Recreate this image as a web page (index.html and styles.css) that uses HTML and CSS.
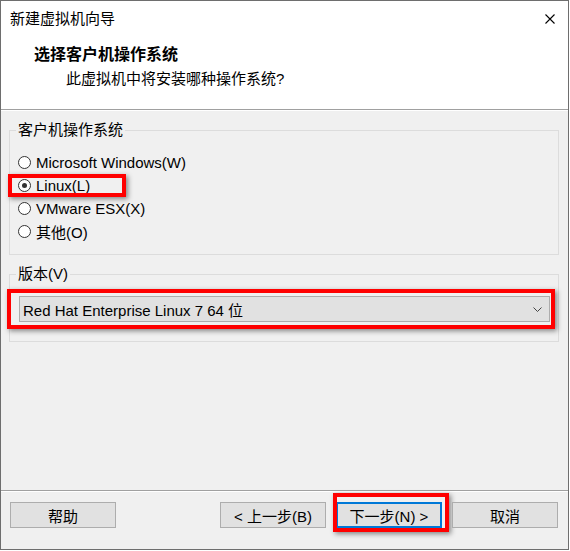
FILE: index.html
```html
<!DOCTYPE html>
<html lang="zh-CN">
<head>
    <meta charset="UTF-8">
    <title>新建虚拟机向导</title>
    <link rel="stylesheet" href="styles.css">
</head>
<body>

<div class="window">
    <div class="titlebar">
        <span class="title">新建虚拟机向导</span>
        <svg class="close" width="10" height="10" viewBox="0 0 10 10">
            <path d="M0.5 0.5L9.5 9.5M9.5 0.5L0.5 9.5" stroke="#000" stroke-width="1.1" fill="none"/>
        </svg>
    </div>

    <div class="header">
        <div class="header-title">选择客户机操作系统</div>
        <div class="header-sub">此虚拟机中将安装哪种操作系统?</div>
    </div>

    <div class="content">
        <fieldset class="group group-os">
            <legend>客户机操作系统</legend>
            <label class="radio-row"><span class="radio"></span>Microsoft Windows(W)</label>
            <label class="radio-row marked"><span class="radio checked"></span>Linux(L)<span class="mark mark-linux"></span></label>
            <label class="radio-row"><span class="radio"></span>VMware ESX(X)</label>
            <label class="radio-row"><span class="radio"></span>其他(O)</label>
        </fieldset>

        <fieldset class="group group-version">
            <legend>版本(V)</legend>
            <div class="combo">
                <span>Red Hat Enterprise Linux 7 64 位</span>
                <svg class="chevron" width="9" height="5" viewBox="0 0 9 5">
                    <path d="M0.5 0.5L4.5 4.5L8.5 0.5" stroke="#444" stroke-width="1" fill="none"/>
                </svg>
                <span class="mark mark-combo"></span>
            </div>
        </fieldset>
    </div>

    <div class="footer">
        <button class="btn">帮助</button>
        <div class="spacer"></div>
        <button class="btn">&lt; 上一步(B)</button>
        <button class="btn btn-default">下一步(N) &gt;<span class="mark mark-next"></span></button>
        <button class="btn">取消</button>
    </div>
</div>

</body>
</html>
```

FILE: styles.css
```css
body {
    margin: 0;
    padding: 0;
    background: #fff;
    font-family: "Liberation Sans", "Noto Sans CJK SC", sans-serif;
    font-size: 15px;
    color: #000;
}

.window {
    width: 569px;
    height: 550px;
    box-sizing: border-box;
    border: 1px solid #6e6e6e;
    display: flex;
    flex-direction: column;
    background: #f0f0f0;
}

/* title bar */
.titlebar {
    height: 35px;
    background: #fff;
    display: flex;
    align-items: center;
    justify-content: space-between;
    padding: 0 13px 0 9px;
}
.title {
    line-height: 20px;
}

/* wizard header */
.header {
    height: 73px;
    background: #fff;
    border-bottom: 1px solid #a0a0a0;
    box-shadow: 0 1px 0 #fff;
    padding-left: 33px;
    box-sizing: content-box;
}
.header-title {
    font-size: 16px;
    font-weight: bold;
    line-height: 20px;
    padding-top: 9px;
}
.header-sub {
    line-height: 20px;
    margin-top: 4px;
    padding-left: 32px;
}

/* main area */
.content {
    flex: 1;
    padding: 12px 9px 0 8px;
    position: relative;
}
.group {
    margin: 0;
    border: 1px solid #dcdcdc;
    padding: 0 8px 0 6px;
    min-width: 0;
}
.group legend {
    padding: 0 2px;
    line-height: 16px;
}
.group-os {
    padding-top: 13px;
    padding-bottom: 11px;
}
.group-version {
    margin-top: 11px;
    padding-top: 14px;
    padding-bottom: 19px;
}

.radio-row {
    display: flex;
    align-items: center;
    height: 23px;
    padding-left: 2px;
    position: relative;
}
.radio {
    width: 11px;
    height: 11px;
    border: 1px solid #333;
    border-radius: 50%;
    background: #fff;
    margin-right: 5px;
    position: relative;
}
.radio.checked::after {
    content: "";
    position: absolute;
    left: 3px;
    top: 3px;
    width: 5px;
    height: 5px;
    border-radius: 50%;
    background: #333;
}

.combo {
    margin-left: 3px;
    height: 26px;
    box-sizing: border-box;
    border: 1px solid #adadad;
    background: #e1e1e1;
    display: flex;
    align-items: center;
    justify-content: space-between;
    padding: 0 7px 0 3px;
    position: relative;
}

/* footer buttons */
.footer {
    height: 47px;
    border-top: 1px solid #a0a0a0;
    box-shadow: inset 0 1px 0 #fff;
    display: flex;
    align-items: flex-start;
    gap: 10px;
    padding: 11px 10px 0 9px;
}
.spacer {
    flex: 1;
}
.btn {
    width: 106px;
    height: 26px;
    box-sizing: border-box;
    border: 1px solid #adadad;
    background: #e1e1e1;
    font-family: "Liberation Sans", "Noto Sans CJK SC", sans-serif;
    font-size: 15px;
    color: #000;
    padding: 0;
    position: relative;
}
.btn-default {
    border: 2px solid #0078d7;
}

/* red annotation boxes */
.mark {
    position: absolute;
    border: 4px solid #f00;
    box-shadow: 2px 2px 5px rgba(0, 0, 0, 0.45);
    pointer-events: none;
}
.mark-linux {
    left: -8px;
    top: 0;
    width: 110px;
    height: 15px;
}
.mark-combo {
    left: -13px;
    top: -8px;
    right: -6px;
    bottom: -8px;
}
.mark-next {
    left: -5px;
    top: -11px;
    right: -9px;
    bottom: -6px;
}
```
